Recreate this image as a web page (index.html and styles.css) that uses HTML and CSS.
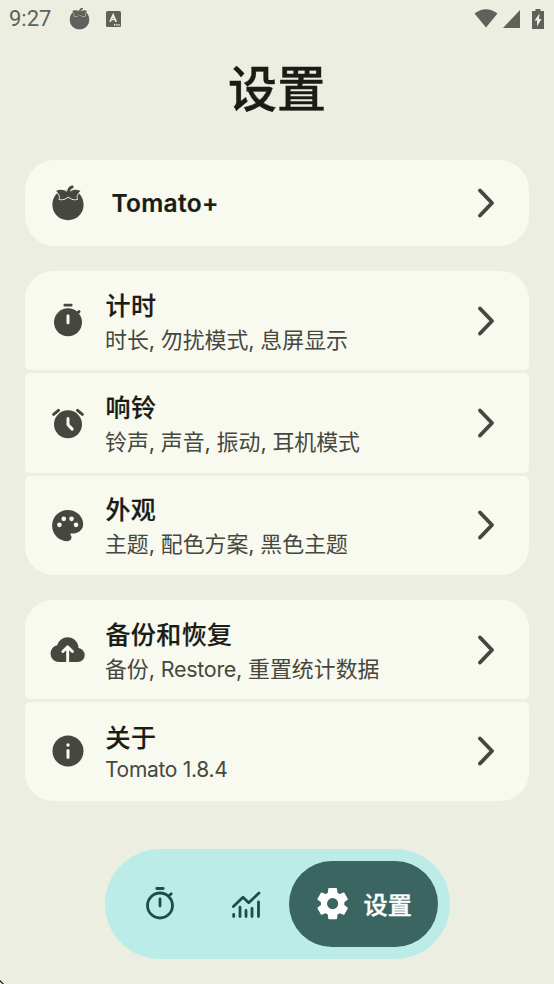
FILE: index.html
```html
<!DOCTYPE html>
<html lang="zh-CN">
<head>
<meta charset="utf-8">
<title>设置</title>
<link rel="stylesheet" href="styles.css">
</head>
<body>
<svg class="defs" aria-hidden="true">
  <symbol id="tomato" viewBox="-20 -20 40 40">
    <path d="M0-13.2C10-13.8 15.6-6.5 15.6 1.8 15.6 10.800 8.700 17.200 0 17.200S-15.600 10.800-15.600 1.800C-15.600-6.500-10-13.800 0-13.200z"/>
    <path class="leaf" d="M-12-12C-8.500-14-4-13.500-1-11.200-.5-14.800 1.500-17.400 5-17.400 6.200-15.500 5.500-14.600 4-14.200 2.700-13.600 2.200-12.500 2-11.200 5-13.700 9-13.700 12.500-12 11-11.500 10.800-9.500 8.700-7.500L8.900-3.700C5.500-3.200 3-4.200.3-6.200-2.500-4.200-5-3.200-8.500-3.700L-8.300-7.500C-10-9.500-10.500-11.500-12-12z"/>
  </symbol>
  <symbol id="chevron" viewBox="0 0 20 32"><path class="line" d="M4 3.500 16 16 4 28.500"/></symbol>
</svg>

<div class="status">
  <span class="clock">9:27</span>
  <svg class="s-tomato"><use href="#tomato"/></svg>
  <svg class="s-app" viewBox="0 0 15 16"><rect width="15" height="16" rx="1.500"/><path class="cut" d="M4 10.800 7.100 3.800 10.200 10.800M5.200 8.500h3.900M8 13.800h1.200M10.300 13.800h1.200M12.500 13.800h1.200"/></svg>
  <span class="space"></span>
  <svg class="s-wifi" viewBox="0 0 24 19"><path d="M.5 4.500Q12-4 23.500 4.500L12 18.500z"/></svg>
  <svg class="s-signal" viewBox="0 0 17 18"><path d="M17 0V18H0z"/></svg>
  <svg class="s-battery" viewBox="0 0 12 20"><path d="M3.500 0h5v2H12v18H0V2h3.500z"/><path class="bolt" d="M7.500 4.500 2.500 11.500H5V17.500L9.500 10H7z"/></svg>
</div>

<h1>设置</h1>

<main>
  <section class="group">
    <div class="card single">
      <svg class="icon"><use href="#tomato"/></svg>
      <div class="text"><div class="title latin plus">Tomato+</div></div>
      <svg class="chev"><use href="#chevron"/></svg>
    </div>
  </section>

  <section class="group">
    <div class="card">
      <svg class="icon" viewBox="-20 -20 40 40"><circle cx="0" cy="1.300" r="14"/><rect x="-4.500" y="-17.300" width="9" height="2.900" rx="1"/><path class="knob" d="M8.500-7 11-9.400"/><path class="cut3" d="M0-5.200V1.800"/></svg>
      <div class="text"><div class="title">计时</div><div class="sub">时长<i>, </i>勿扰模式<i>, </i>息屏显示</div></div>
      <svg class="chev"><use href="#chevron"/></svg>
    </div>
    <div class="card">
      <svg class="icon" viewBox="-20 -20 40 40"><circle cx="0" cy="1.300" r="14"/><path class="knob" d="M-14.400-8.700-9.500-12.600M14.400-8.700 9.500-12.600"/><path class="cut3" d="M0-4.500V1.700L4.200 6.100"/></svg>
      <div class="text"><div class="title">响铃</div><div class="sub">铃声<i>, </i>声音<i>, </i>振动<i>, </i>耳机模式</div></div>
      <svg class="chev"><use href="#chevron"/></svg>
    </div>
    <div class="card">
      <svg class="icon m24" viewBox="0 0 24 24"><path d="M12 2C6.490 2 2 6.490 2 12s4.490 10 10 10c1.380 0 2.500-1.120 2.500-2.500 0-.610-.230-1.200-.640-1.670-.080-.100-.130-.210-.130-.330 0-.280.220-.500.500-.500H16c3.310 0 6-2.690 6-6 0-4.960-4.490-9-10-9z"/><g class="dots"><circle cx="6.700" cy="11.500" r="1.500"/><circle cx="9.500" cy="7.600" r="1.500"/><circle cx="14.500" cy="7.600" r="1.500"/><circle cx="17.400" cy="11.500" r="1.500"/></g></svg>
      <div class="text"><div class="title">外观</div><div class="sub">主题<i>, </i>配色方案<i>, </i>黑色主题</div></div>
      <svg class="chev"><use href="#chevron"/></svg>
    </div>
  </section>

  <section class="group">
    <div class="card">
      <svg class="icon m24" viewBox="0 0 24 24"><path d="M6.500 20q-2.280 0-3.890-1.570T1 14.580q0-1.950 1.170-3.480t3.080-1.950q.630-2.300 2.500-3.720T12 4q2.930 0 4.960 2.040T19 11q1.730.200 2.860 1.490T23 15.500q0 1.880-1.310 3.190T18.500 20z"/><path class="arrow" d="M12 20V11M8.900 13.200 12 10.200 15.100 13.200"/></svg>
      <div class="text"><div class="title">备份和恢复</div><div class="sub">备份<i>, </i><span class="latin restore">Restore</span><i>, </i>重置统计数据</div></div>
      <svg class="chev"><use href="#chevron"/></svg>
    </div>
    <div class="card about">
      <svg class="icon" viewBox="-20 -20 40 40"><circle cx="0" cy="0" r="15.500"/><g class="dots"><circle cx="0" cy="-6" r="1.700"/><rect x="-1.500" y="-1.800" width="3" height="9.500" rx="1"/></g></svg>
      <div class="text"><div class="title">关于</div><div class="sub latin version">Tomato 1.8.4</div></div>
      <svg class="chev"><use href="#chevron"/></svg>
    </div>
  </section>
</main>

<nav>
  <svg class="n-icon timer" viewBox="-20 -20 40 40"><circle cx="0" cy="1.500" r="12.500"/><path d="M-3.200-15.500H3.200M9-8.500 11.200-10.200M0-5V2"/></svg>
  <svg class="n-icon chart" viewBox="-20 -20 40 40"><path d="M-12.300 10.500V12.500M-6 3.200V12.500M0 6.500V12.500M6 4.500V12.500M12.500-2V12.500"/><path d="M-12.600 2.600-3-6.700 2.700-1.300 13-11"/></svg>
  <div class="active">
    <svg class="gear" viewBox="0 0 24 24"><path fill-rule="evenodd" d="M9.700 21.500 9.300 18.600Q8.400 18.200 7.500 17.600L4.900 18.700 2.700 14.900 5 13.100Q4.900 12 5 10.900L2.700 9.100 4.900 5.300 7.500 6.400Q8.400 5.800 9.300 5.400L9.700 2.500H14.300L14.700 5.400Q15.600 5.800 16.500 6.400L19.100 5.300 21.300 9.100 19 10.900Q19.100 12 19 13.100L21.300 14.900 19.100 18.700 16.500 17.600Q15.600 18.200 14.700 18.600L14.300 21.500zM12 7.900A4.100 4.100 0 1 0 12 16.100 4.100 4.100 0 1 0 12 7.900z"/></svg>
    <span>设置</span>
  </div>
</nav>
<svg class="corner" viewBox="0 0 4 4"><path d="M0 0 4 4H2.500L0 1.500z"/></svg>
</body>
</html>
```
FILE: styles.css
```css
* { box-sizing: border-box; }
body {
  margin: 0;
  height: 984px;
  overflow: hidden;
  display: flex;
  flex-direction: column;
  background: #eceee1;
  color: #1a1c16;
  font-family: "Noto Sans CJK SC", sans-serif;
}
svg { display: block; flex: none; fill: #46483f; }
.defs { position: absolute; width: 0; height: 0; }
.leaf { stroke: #f8faf0; stroke-width: 1.500; paint-order: stroke; }
.status .leaf { stroke: #eceee1; }

.status {
  height: 37px;
  flex: none;
  display: flex;
  align-items: center;
  padding: 0 10px 0 9px;
}
.status svg { fill: #5f615a; }
.clock { width: 60px; font: 22px/39px Roboto, sans-serif; color: #5f615a; }
.s-tomato { width: 25px; height: 25px; margin-left: -2px; }
.s-app { width: 15px; height: 16px; margin-left: 14px; }
.s-app .cut { fill: none; stroke: #eceee1; stroke-width: 1.700; }
.space { flex: 1; }
.s-wifi { width: 24px; height: 19px; margin-right: 5px; }
.s-signal { width: 17px; height: 18px; margin-right: 12px; }
.s-battery { width: 12px; height: 20px; }
.bolt { fill: #eceee1; }

h1 {
  height: 123px;
  flex: none;
  margin: 0;
  text-align: center;
  font-size: 49px;
  line-height: 98px;
  font-weight: 500;
  -webkit-text-stroke: .4px #1a1c16;
}

main { display: flex; flex-direction: column; gap: 25px; padding: 0 25px; }
.group { display: flex; flex-direction: column; gap: 3.200px; }
.card {
  height: 99.200px;
  display: flex;
  align-items: center;
  padding: 0 32px 0 22.600px;
  border-radius: 5px;
  background: #f8faf0;
}
.card:first-child { border-top-left-radius: 28px; border-top-right-radius: 28px; }
.card:last-child { border-bottom-left-radius: 28px; border-bottom-right-radius: 28px; }
.card.single { height: 86px; border-radius: 30px; }
.card.about { height: 98.200px; }
.icon { width: 40px; height: 40px; }
.m24 { width: 37.300px; height: 37.300px; margin: 0 1.350px; }
.text { flex: 1; padding-left: 17.900px; white-space: nowrap; }
.title { font-size: 25px; line-height: 36px; font-weight: 500; letter-spacing: .4px; -webkit-text-stroke: .2px #1a1c16; }
.sub { font-size: 21.900px; line-height: 32px; padding-top: 1px; margin-left: -.500px; font-weight: 400; color: #46483f; }
.sub i { display: inline-block; width: 12px; white-space: pre; font-style: normal; font-family: Inter, sans-serif; font-weight: 400; }
.latin { font-family: Inter, "Noto Sans CJK SC", sans-serif; }
.plus { padding-left: 6px; font-size: 24.500px; font-weight: 600; letter-spacing: .3px; }
.restore, .version { font-size: 21.500px; font-weight: 400; letter-spacing: -.3px; }
.version { font-size: 21px; line-height: 31px; padding-top: 0; letter-spacing: -.3px; }
.chev { width: 20px; height: 32px; margin-right: 1px; }
.line { fill: none; stroke: #46483f; stroke-width: 3.900; stroke-linecap: round; stroke-linejoin: round; }
.knob { fill: none; stroke: #46483f; stroke-width: 3; stroke-linecap: round; }
.cut3, .arrow { fill: none; stroke: #f8faf0; stroke-width: 3; stroke-linecap: round; stroke-linejoin: round; }
.arrow { stroke-width: 1.900; }
.dots { fill: #f8faf0; }

nav {
  width: 345px;
  height: 110px;
  flex: none;
  margin: 48.600px 0 0 105px;
  padding: 0 12px 0 35px;
  display: flex;
  align-items: center;
  border-radius: 55px;
  background: #bcece7;
}
.n-icon { width: 40px; height: 40px; fill: none; stroke: #1e4e4a; stroke-width: 2.800; stroke-linecap: round; stroke-linejoin: round; }
.chart { margin-left: 46px; }
.active {
  width: 149px;
  height: 86px;
  margin-left: auto;
  display: flex;
  align-items: center;
  padding-left: 24.700px;
  border-radius: 43px;
  background: #3a6561;
  color: #fff;
  font-size: 24.200px;
  font-weight: 500;
}
.gear { width: 37.300px; height: 37.300px; fill: #fff; stroke: #fff; stroke-width: 1; stroke-linejoin: round; }
.active span { margin-left: 12.500px; padding-bottom: 1px; -webkit-text-stroke: .3px #fff; }
.corner { position: absolute; left: 0; bottom: 0; width: 4px; height: 4px; fill: #000; }
```
